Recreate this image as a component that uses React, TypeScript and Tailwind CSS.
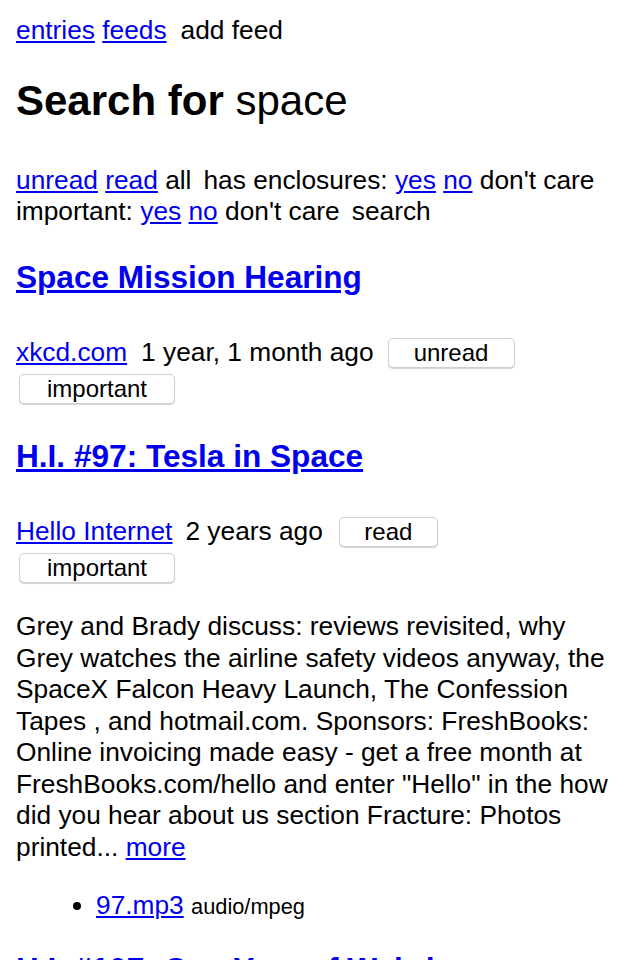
import { useEffect } from 'react';

const link = 'text-[#0000ee] underline';

function ActionButton({ label, width }: { label: string; width: string }) {
  return (
    <button
      className={`${width} h-[30px] rounded-[5px] border border-[#cfcfcf] bg-white text-[24px] leading-[28px] text-black shadow-[0_1px_1px_rgba(0,0,0,0.18)]`}
    >
      {label}
    </button>
  );
}

function Entry({
  title,
  feed,
  age,
  status,
  statusWidth,
  ageGap,
  btnGap,
}: {
  title: string;
  feed: string;
  age: string;
  status: string;
  statusWidth: string;
  ageGap: string;
  btnGap: string;
}) {
  return (
    <>
      <h3 className="text-[31.6px] leading-[36px] font-bold">
        <a href="#" className={link}>
          {title}
        </a>
      </h3>
      <div className="mt-[42.5px] flex items-center h-[31.5px]">
        <a href="#" className={link}>
          {feed}
        </a>
        <span className={ageGap}>{age}</span>
        <span className={btnGap}>
          <ActionButton label={status} width={statusWidth} />
        </span>
      </div>
      <div className="mt-[5px] flex pl-[3px]">
        <ActionButton label="important" width="w-[156px]" />
      </div>
    </>
  );
}

function App() {
  useEffect(() => {
    document.title = 'Search for space';
  }, []);

  return (
    <div className="min-h-screen bg-white text-black font-['Liberation_Sans',Arial,sans-serif] text-[26.3px] leading-[31.5px] px-4 pt-[15px] overflow-hidden">
      {/* nav */}
      <div>
        <a href="#" className={link}>entries</a>{' '}
        <a href="#" className={link}>feeds</a>
        <span className="ml-[14px]">add feed</span>
      </div>

      <h1 className="mt-[30px] text-[42px] leading-[48px]">
        <span className="font-bold">Search for</span> space
      </h1>

      {/* filters */}
      <div className="mt-[40px]">
        <div>
          <a href="#" className={link}>unread</a>{' '}
          <a href="#" className={link}>read</a> all
          <span className="ml-[12px]">has enclosures:</span>{' '}
          <a href="#" className={link}>yes</a>{' '}
          <a href="#" className={link}>no</a> don't care
        </div>
        <div>
          important: <a href="#" className={link}>yes</a>{' '}
          <a href="#" className={link}>no</a> don't care
          <span className="ml-[12px]">search</span>
        </div>
      </div>

      <div className="mt-[31px]">
        <Entry
          title="Space Mission Hearing"
          feed="xkcd.com"
          age="1 year, 1 month ago"
          status="unread"
          statusWidth="w-[127px]"
          ageGap="ml-[14px]"
          btnGap="ml-[14px]"
        />
      </div>

      <div className="mt-[34px]">
        <Entry
          title="H.I. #97: Tesla in Space"
          feed="Hello Internet"
          age="2 years ago"
          status="read"
          statusWidth="w-[99px]"
          ageGap="ml-[13px]"
          btnGap="ml-[16px]"
        />
      </div>

      <p className="mt-[28.5px]">
        Grey and Brady discuss: reviews revisited, why Grey watches the airline safety videos
        anyway, the SpaceX Falcon Heavy Launch, The Confession Tapes , and hotmail.com. Sponsors:
        FreshBooks: Online invoicing made easy - get a free month at FreshBooks.com/hello and enter
        "Hello" in the how did you hear about us section Fracture: Photos printed...{' '}
        <a href="#" className={link}>more</a>
      </p>

      <ul className="mt-[27px] list-disc pl-[80px]">
        <li>
          <a href="#" className={link}>97.mp3</a>{' '}
          <span className="text-[21.8px]">audio/mpeg</span>
        </li>
      </ul>

      <h3 className="mt-[28px] text-[31.6px] leading-[36px] font-bold">
        <a href="#" className={link}>
          H.I. #107: One Year of Weird
        </a>
      </h3>
    </div>
  );
}

export default App;
